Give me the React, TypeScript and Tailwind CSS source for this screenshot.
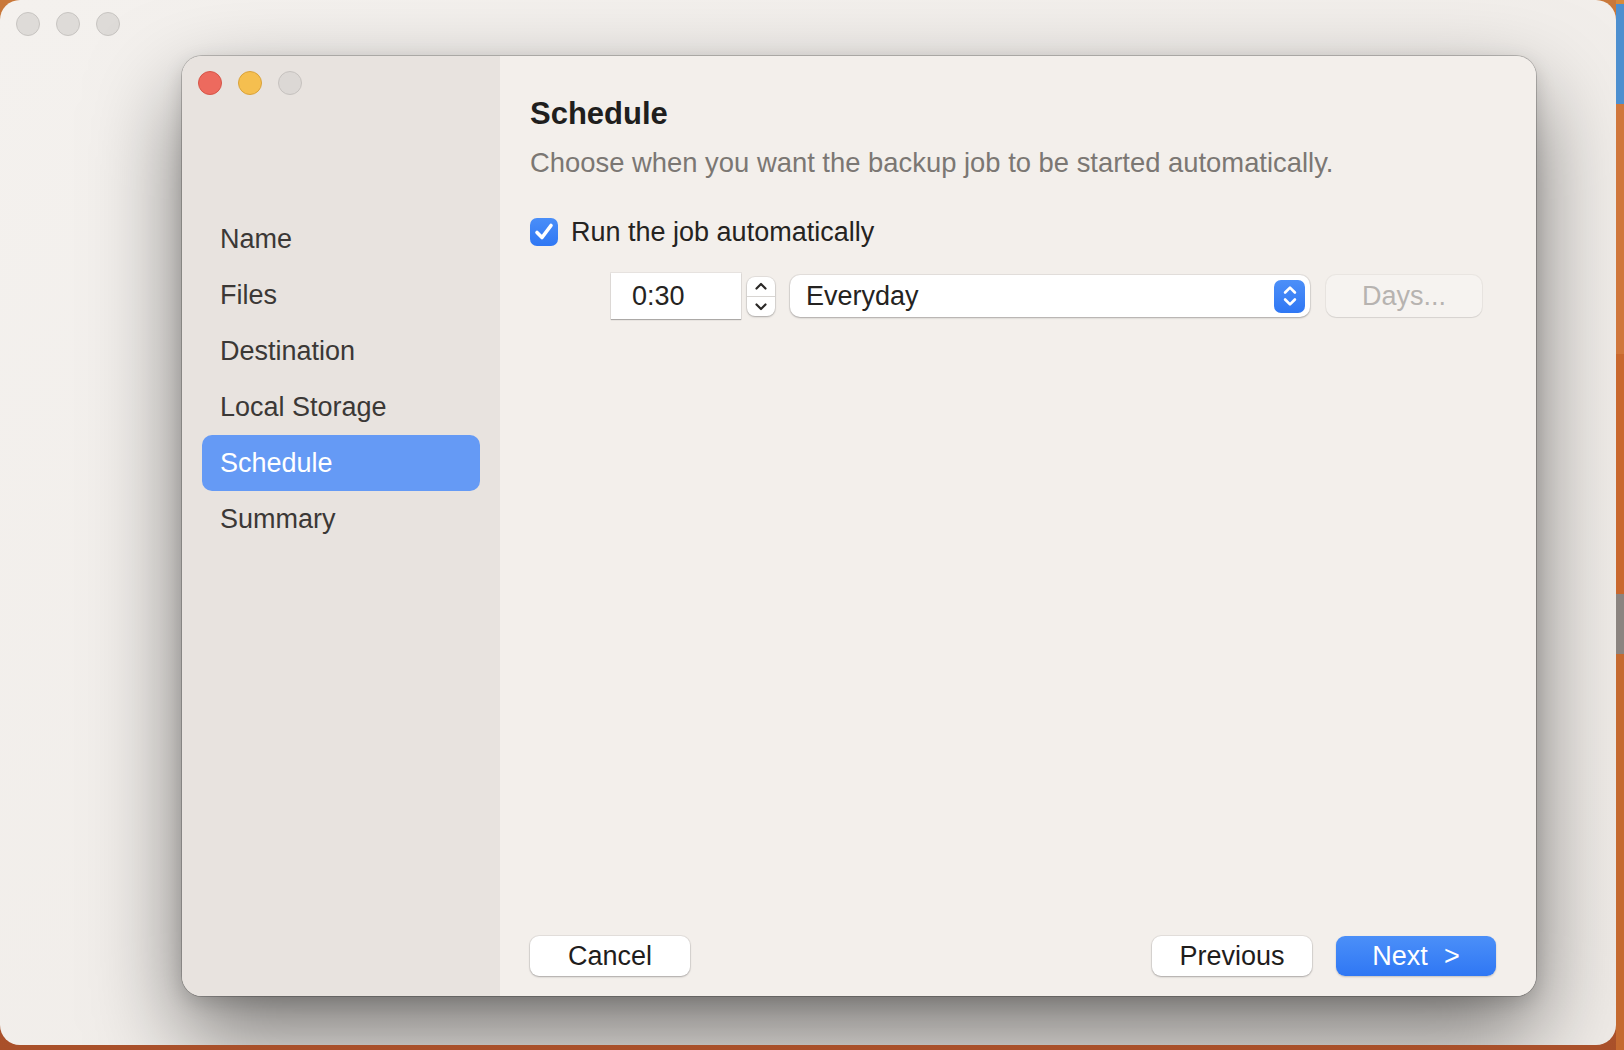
import { ReactNode } from "react";

const font = { fontFamily: '"Liberation Sans", Arial, sans-serif' };

function Light({ color, border }: { color: string; border: string }) {
  return <span className={`block h-[24px] w-[24px] rounded-full border ${color} ${border}`} />;
}

function Chevrons({ stroke, size = 10 }: { stroke: string; size?: number }) {
  return (
    <svg width={size} height={size * 2} viewBox="0 0 10 20" fill="none">
      <path d="M1.5 7.5 L5 4 L8.5 7.5" stroke={stroke} strokeWidth="1.9" strokeLinecap="round" strokeLinejoin="round" />
      <path d="M1.5 12.5 L5 16 L8.5 12.5" stroke={stroke} strokeWidth="1.9" strokeLinecap="round" strokeLinejoin="round" />
    </svg>
  );
}

function Button({ children, primary }: { children: ReactNode; primary?: boolean }) {
  return (
    <button
      type="button"
      className={`flex h-[40px] w-[160px] items-center justify-center rounded-[9px] text-[27px] leading-none ${
        primary
          ? "bg-gradient-to-b from-[#4b8ff8] to-[#2f77f4] text-white shadow-[0_1px_2px_rgba(0,0,0,0.2)]"
          : "bg-white text-[#1f1d1c] shadow-[0_1px_2px_rgba(0,0,0,0.25),0_0_0_1px_rgba(0,0,0,0.06)]"
      }`}
    >
      {children}
    </button>
  );
}

const steps = ["Name", "Files", "Destination", "Local Storage", "Schedule", "Summary"];

export default function App() {
  return (
    <div style={font} className="flex h-[1050px] w-[1624px] overflow-hidden bg-gradient-to-b from-[#c9783a] to-[#a9502a]">
      {/* outer (background) window */}
      <div className="flex h-[1045px] w-[1616px] flex-col overflow-hidden rounded-[20px] bg-gradient-to-br from-[#f4f1ee] to-[#efebe7]">
        <div className="flex gap-4 pl-[16px] pt-[12px]">
          <Light color="bg-[#dedbd8]" border="border-[#c7c4c1]" />
          <Light color="bg-[#dedbd8]" border="border-[#c7c4c1]" />
          <Light color="bg-[#dedbd8]" border="border-[#c7c4c1]" />
        </div>

        {/* wizard window */}
        <div className="ml-[182px] mt-[20px] flex h-[940px] w-[1354px] overflow-hidden rounded-[20px] shadow-[0_40px_90px_rgba(0,0,0,0.5),0_6px_20px_rgba(0,0,0,0.15),0_0_0_1px_rgba(0,0,0,0.2)]">
          <aside className="flex w-[318px] flex-col bg-[#e8e3df] px-[20px]">
            <div className="flex gap-4 pt-[15px]" style={{ marginLeft: -4 }}>
              <Light color="bg-[#ed6a5e]" border="border-[#d65548]" />
              <Light color="bg-[#f5bf4f]" border="border-[#d9a23a]" />
              <Light color="bg-[#dcd8d5]" border="border-[#c6c2bf]" />
            </div>
            <nav className="mt-[116px] flex flex-col">
              {steps.map((s) => (
                <div
                  key={s}
                  className={`flex h-[56px] items-center rounded-[10px] pl-[18px] text-[27px] ${
                    s === "Schedule" ? "bg-[#659af5] text-white" : "text-[#3b3836]"
                  }`}
                >
                  {s}
                </div>
              ))}
            </nav>
          </aside>

          <main className="flex flex-1 flex-col bg-[#f3efeb] pl-[30px] pr-[40px] pb-[20px] pt-[40px]">
            <h1 className="text-[31px] font-bold leading-[36px] text-[#201e1d]">Schedule</h1>
            <p className="mt-[15px] text-[27.4px] leading-[32px] text-[#7b7773]">
              Choose when you want the backup job to be started automatically.
            </p>

            <label className="mt-[37px] flex h-[32px] items-center gap-[13px] text-[27px] text-[#252321]">
              <span className="flex h-[28px] w-[28px] items-center justify-center rounded-[7px] bg-gradient-to-b from-[#4a8ef8] to-[#2f77f4]">
                <svg width="24" height="24" viewBox="0 0 24 24" fill="none">
                  <path d="M5 12.5 L10 17.5 L19 5.5" stroke="white" strokeWidth="3.6" strokeLinecap="round" strokeLinejoin="round" />
                </svg>
              </span>
              Run the job automatically
            </label>

            <div className="ml-[81px] mt-[25px] flex h-[46px] items-center">
              <div className="flex h-[46px] w-[130px] items-center bg-white pl-[21px] text-[27px] text-[#252321] shadow-[0_1px_1px_rgba(0,0,0,0.25),0_0_0_1px_rgba(0,0,0,0.05)]">
                0:30
              </div>
              <div className="ml-[6px] flex h-[39px] w-[28px] flex-col overflow-hidden rounded-[8px] bg-white shadow-[0_1px_2px_rgba(0,0,0,0.25),0_0_0_1px_rgba(0,0,0,0.06)]">
                <div className="flex flex-1 items-center justify-center border-b border-[#d8d5d2]">
                  <svg width="14" height="9" viewBox="0 0 14 9" fill="none">
                    <path d="M2.5 6.5 L7 2 L11.5 6.5" stroke="#2a2826" strokeWidth="2.2" strokeLinecap="round" strokeLinejoin="round" />
                  </svg>
                </div>
                <div className="flex flex-1 items-center justify-center">
                  <svg width="14" height="9" viewBox="0 0 14 9" fill="none">
                    <path d="M2.5 2.5 L7 7 L11.5 2.5" stroke="#2a2826" strokeWidth="2.2" strokeLinecap="round" strokeLinejoin="round" />
                  </svg>
                </div>
              </div>

              <div className="ml-[15px] flex h-[42px] w-[520px] items-center justify-between rounded-[10px] bg-white pl-[16px] pr-[5px] text-[27px] text-[#252321] shadow-[0_1px_2px_rgba(0,0,0,0.25),0_0_0_1px_rgba(0,0,0,0.06)]">
                <span>Everyday</span>
                <span className="flex h-[33px] w-[31px] items-center justify-center rounded-[7px] bg-gradient-to-b from-[#4c8ff8] to-[#2f77f4]">
                  <Chevrons stroke="white" size={14} />
                </span>
              </div>

              <div className="ml-[16px] flex h-[42px] w-[156px] items-center justify-center rounded-[10px] bg-[#f6f3f0] text-[27px] text-[#b7b3b0] shadow-[0_1px_1px_rgba(0,0,0,0.08),0_0_0_1px_rgba(0,0,0,0.04)]">
                Days...
              </div>
            </div>

            <div className="mt-auto flex items-center">
              <Button>Cancel</Button>
              <div className="flex-1" />
              <Button>Previous</Button>
              <div className="ml-[24px]">
                <Button primary>
                  <span>Next</span>
                  <span className="ml-[16px]">&gt;</span>
                </Button>
              </div>
            </div>
          </main>
        </div>
      </div>

      {/* desktop wallpaper sliver */}
      <div className="flex w-[8px] flex-col">
        <div className="h-[4px] bg-[#d98a3a]" />
        <div className="h-[100px] bg-[#4d8fcf]" />
        <div className="h-[250px] bg-[#d0773c]" />
        <div className="h-[240px] bg-[#c9682e]" />
        <div className="h-[60px] bg-[#8b8480]" />
        <div className="flex-1 bg-[#c56a30]" />
      </div>
    </div>
  );
}
